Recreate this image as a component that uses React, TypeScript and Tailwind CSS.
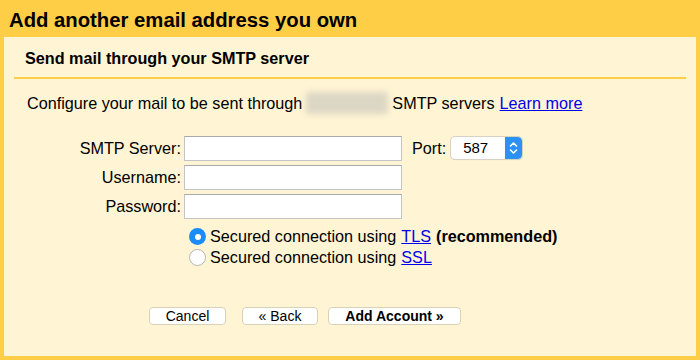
import React from "react";

export default function App() {
  return (
    <div
      className="w-[700px] h-[360px] bg-[#ffce47] flex flex-col px-[4px] pb-[4px] text-black"
      style={{ fontFamily: '"Liberation Sans", Arial, sans-serif' }}
    >
      <div className="h-[37px] flex items-center pl-[5px] pt-[4px] text-[20.3px] font-bold leading-none">
        Add another email address you own
      </div>
      <div className="flex-1 bg-[#fff5d4] flex flex-col">
        <div className="mx-[10px] h-[42px] border-b-2 border-[#ffce47] flex items-center pl-[11px] pt-[2px] text-[16.2px] font-bold">
          Send mail through your SMTP server
        </div>
        <div className="pl-[23px] pt-[12px] text-[16.2px] flex items-center h-[36px]">
          <span>Configure your mail to be sent through</span>
          <span className="inline-block w-[82px] h-[22px] mx-[4px] bg-[#dcd6c4] blur-[3px]" />
          <span>SMTP servers</span>
          <a href="#" className="ml-[5px] text-[#0000ee] underline">Learn more</a>
        </div>
        <div className="mt-[21px] flex">
          <div className="w-[180px] flex flex-col items-end text-[16.2px] pr-[3px]">
            <div className="h-[25px] flex items-center">SMTP Server:</div>
            <div className="h-[25px] mt-[4px] flex items-center">Username:</div>
            <div className="h-[25px] mt-[4px] flex items-center">Password:</div>
          </div>
          <div className="flex flex-col">
            <div className="w-[218px] h-[25px] bg-white border border-[#c4c4c4] border-t-[#a9a9a9]" />
            <div className="w-[218px] h-[25px] mt-[4px] bg-white border border-[#c4c4c4] border-t-[#a9a9a9]" />
            <div className="w-[218px] h-[25px] mt-[4px] bg-white border border-[#c4c4c4] border-t-[#a9a9a9]" />
          </div>
          <div className="ml-[10px] h-[25px] flex items-center text-[16.2px]">Port:</div>
          <div className="ml-[5px] mt-[1px] w-[71px] h-[22px] bg-white rounded-[4px] shadow-[0_0_0_1px_#d6d2c4,0_1px_1px_rgba(0,0,0,0.15)] flex items-center overflow-hidden">
            <span className="flex-1 pl-[12px] text-[15px]">587</span>
            <div className="w-[17px] h-full bg-[#2e8ff4] flex items-center justify-center rounded-r-[4px]">
              <svg width="9" height="14" viewBox="0 0 9 14" fill="none" stroke="white" strokeWidth="1.6" strokeLinecap="round" strokeLinejoin="round">
                <path d="M1.5 5 L4.5 2 L7.5 5" />
                <path d="M1.5 9 L4.5 12 L7.5 9" />
              </svg>
            </div>
          </div>
        </div>
        <div className="ml-[185px] mt-[7px] flex flex-col text-[16.2px]">
          <div className="flex items-center h-[21px]">
            <span className="w-[17px] h-[17px] rounded-full bg-[#1a8cf9] flex items-center justify-center">
              <span className="w-[6px] h-[6px] rounded-full bg-white" />
            </span>
            <span className="ml-[4px]">Secured connection using </span>
            <a href="#" className="ml-[5px] text-[#0000ee] underline">TLS</a>
            <span className="ml-[5px] font-bold">(recommended)</span>
          </div>
          <div className="flex items-center h-[21px]">
            <span className="w-[17px] h-[17px] rounded-full bg-white border border-[#b4b4b4]" />
            <span className="ml-[4px]">Secured connection using </span>
            <a href="#" className="ml-[5px] text-[#0000ee] underline">SSL</a>
          </div>
        </div>
        <div className="ml-[145px] mt-[39px] flex text-[14px]">
          <button className="w-[77px] h-[18px] bg-white rounded-[4px] border border-[#d9d1b8] flex items-center justify-center leading-none">
            Cancel
          </button>
          <button className="ml-[16px] w-[76px] h-[18px] bg-white rounded-[4px] border border-[#d9d1b8] flex items-center justify-center leading-none">
            « Back
          </button>
          <button className="ml-[10px] w-[133px] h-[18px] bg-white rounded-[4px] border border-[#d9d1b8] flex items-center justify-center font-bold leading-none">
            Add Account »
          </button>
        </div>
      </div>
    </div>
  );
}
